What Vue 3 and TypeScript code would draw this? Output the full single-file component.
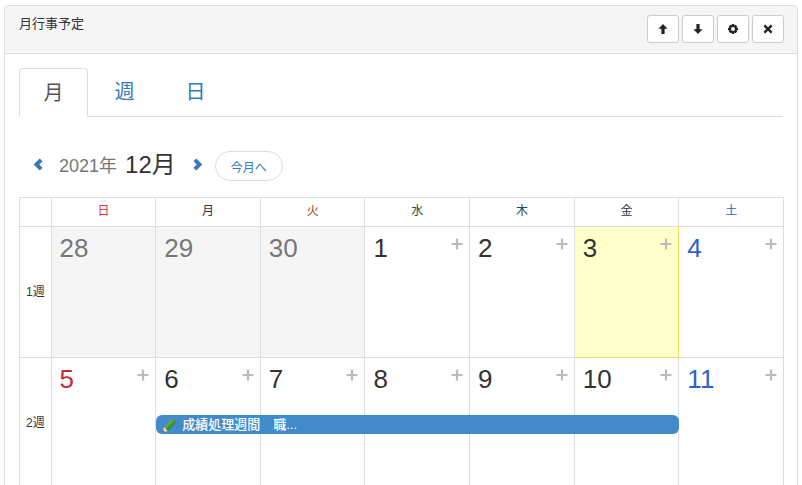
<script setup lang="ts">
interface DayCell {
  label: string
  tone?: 'muted' | 'sun' | 'sat'
  today?: boolean
  add?: boolean
}

interface Week {
  name: string
  days: DayCell[]
}

const tabs = ['月', '週', '日']

const weekdays = [
  { label: '日', cls: 'wd-sun' },
  { label: '月', cls: '' },
  { label: '火', cls: 'wd-tue' },
  { label: '水', cls: 'wd-wed' },
  { label: '木', cls: 'wd-thu' },
  { label: '金', cls: '' },
  { label: '土', cls: 'wd-sat' },
]

const weeks: Week[] = [
  {
    name: '1週',
    days: [
      { label: '28', tone: 'muted' },
      { label: '29', tone: 'muted' },
      { label: '30', tone: 'muted' },
      { label: '1', add: true },
      { label: '2', add: true },
      { label: '3', add: true, today: true },
      { label: '4', add: true, tone: 'sat' },
    ],
  },
  {
    name: '2週',
    days: [
      { label: '5', add: true, tone: 'sun' },
      { label: '6', add: true },
      { label: '7', add: true },
      { label: '8', add: true },
      { label: '9', add: true },
      { label: '10', add: true },
      { label: '11', add: true, tone: 'sat' },
    ],
  },
]
</script>

<template>
  <div class="panel">
    <div class="panel-heading">
      <span class="panel-title">月行事予定</span>
      <div class="tools">
        <button class="tool">
          <svg viewBox="0 0 12 12"><path d="M6 1 10.6 5.8H7.6V11H4.4V5.8H1.4Z" /></svg>
        </button>
        <button class="tool">
          <svg viewBox="0 0 12 12"><path d="M6 11 1.4 6.2H4.4V1H7.6V6.2H10.6Z" /></svg>
        </button>
        <button class="tool">
          <svg viewBox="0 0 12 12">
            <path fill-rule="evenodd" d="M4.9 1H7.1L7.4 2.5 8.6 1.8 10.2 3.4 9.5 4.6 11 4.9V7.1L9.5 7.4 10.2 8.6 8.6 10.2 7.4 9.5 7.1 11H4.9L4.6 9.5 3.4 10.2 1.8 8.6 2.5 7.4 1 7.1V4.9L2.5 4.6 1.8 3.4 3.4 1.8 4.6 2.5ZM6 4A2 2 0 1 0 6 8 2 2 0 1 0 6 4Z" />
          </svg>
        </button>
        <button class="tool">
          <svg viewBox="0 0 12 12"><path d="M3.2 1.5 6 4.3 8.8 1.5 10.5 3.2 7.7 6 10.5 8.8 8.8 10.5 6 7.7 3.2 10.5 1.5 8.8 4.3 6 1.5 3.2Z" /></svg>
        </button>
      </div>
    </div>

    <div class="panel-body">
      <ul class="tabs">
        <li v-for="(tab, i) in tabs" :key="tab" class="tab" :class="{ active: i === 0 }">{{ tab }}</li>
      </ul>

      <div class="month-nav">
        <svg class="chev" viewBox="0 0 10 12"><path d="M6.6 0.4 9.2 3 6.2 6 9.2 9 6.6 11.6 1 6Z" /></svg>
        <span class="year">2021年</span>
        <span class="month">12月</span>
        <svg class="chev chev-next" viewBox="0 0 10 12"><path d="M3.4 0.4 9 6 3.4 11.6 0.8 9 3.8 6 0.8 3Z" /></svg>
        <button class="this-month">今月へ</button>
      </div>

      <div class="calendar">
        <div class="row head-row">
          <div class="cell head"></div>
          <div v-for="wd in weekdays" :key="wd.label" class="cell head" :class="wd.cls">{{ wd.label }}</div>
        </div>

        <div v-for="week in weeks" :key="week.name" class="row week-row">
          <div class="cell week-name">{{ week.name }}</div>
          <div
            v-for="(day, i) in week.days"
            :key="day.label"
            class="cell day"
            :class="[day.tone, { today: day.today }]"
            :style="{ gridColumn: i + 2 }"
          >
            <span class="num">{{ day.label }}</span>
            <svg v-if="day.add" class="plus" viewBox="0 0 12 12"><path d="M4.9 0.5H7.1V4.9H11.5V7.1H7.1V11.5H4.9V7.1H0.5V4.9H4.9Z" /></svg>
          </div>
          <div v-if="week.name === '2週'" class="event">
            <svg class="pencil" viewBox="0 0 16 16">
              <path fill="#f3d3a4" d="M0.6 15.4 2 9.8 6.2 14Z" />
              <path fill="#3d3d3d" d="M0.6 15.4 1.1 13.4 2.6 14.9Z" />
              <path fill="#55a84f" d="M2 9.8 10.4 1.4 14.6 5.6 6.2 14Z" />
              <path fill="#3b8a42" d="M4.1 11.9 12.5 3.5 14.6 5.6 6.2 14Z" />
            </svg>
            <span>成績処理週間　職...</span>
          </div>
        </div>
      </div>
    </div>
  </div>
</template>

<style>
html,
body {
  margin: 0;
  height: 485px;
  overflow: hidden;
  background: #fff;
}
</style>

<style scoped>
.panel {
  width: 794px;
  margin: 5px 0 0 4px;
  box-sizing: border-box;
  border: 1px solid #ddd;
  border-radius: 4px;
  color: #333;
  font-family: "Liberation Sans", Arial, "Noto Sans CJK JP", sans-serif;
  font-size: 14px;
}

.panel-heading {
  height: 48px;
  box-sizing: border-box;
  padding: 10px 13px 0 14px;
  display: flex;
  justify-content: space-between;
  align-items: flex-start;
  background: #f5f5f5;
  border-bottom: 1px solid #ddd;
  border-radius: 3px 3px 0 0;
}

.panel-title {
  font-size: 13px;
  line-height: 16px;
}

.tools {
  display: flex;
  gap: 3px;
  margin-top: -1px;
}

.tool {
  width: 32px;
  height: 28px;
  padding: 0;
  display: flex;
  align-items: center;
  justify-content: center;
  background: #fff;
  border: 1px solid #ccc;
  border-radius: 3px;
}

.tool svg {
  width: 12px;
  height: 12px;
  fill: #222;
}

.panel-body {
  padding: 14px 14px 0 14px;
}

.tabs {
  display: flex;
  margin: 0;
  padding: 0;
  height: 49px;
  box-sizing: border-box;
  list-style: none;
  border-bottom: 1px solid #ddd;
}

.tab {
  width: 71px;
  height: 49px;
  box-sizing: border-box;
  padding-top: 10px;
  text-align: center;
  font-size: 20px;
  line-height: 28px;
  color: #337ab7;
}

.tab.active {
  width: 69px;
  margin-right: 1px;
  color: #555;
  background: #fff;
  border: 1px solid #ddd;
  border-bottom-color: #fff;
  border-radius: 4px 4px 0 0;
}

.month-nav {
  height: 34px;
  margin-top: 31px;
  margin-bottom: 15px;
  display: flex;
  align-items: center;
  padding-left: 13px;
}

.chev {
  width: 12px;
  height: 13px;
  margin-bottom: 2px;
  fill: #337ab7;
}

.year {
  margin-left: 15px;
  margin-bottom: 2px;
  font-size: 18px;
  color: #777;
}

.month {
  margin-left: 8px;
  margin-bottom: 6px;
  font-size: 24px;
  color: #333;
}

.chev-next {
  margin-left: 16px;
}

.this-month {
  margin-left: 11px;
  margin-top: 2px;
  width: 68px;
  height: 30px;
  padding: 0;
  background: #fff;
  border: 1px solid #ddd;
  border-radius: 15px;
  color: #337ab7;
  font-family: inherit;
  font-size: 12px;
}

.calendar {
  width: 765px;
  border-top: 1px solid #ddd;
  border-left: 1px solid #ddd;
  box-sizing: border-box;
}

.row {
  display: grid;
  grid-template-columns: 31.6px repeat(7, minmax(0, 1fr));
}

.cell {
  box-sizing: border-box;
  border-right: 1px solid #ddd;
  border-bottom: 1px solid #ddd;
  grid-row: 1;
}

.head {
  height: 29px;
  line-height: 27px;
  text-align: center;
  font-size: 12px;
}

.wd-sun { color: #d9333f; }
.wd-tue { color: #a3402c; }
.wd-wed { color: #2f4f2f; }
.wd-thu { color: #1f4a5f; }
.wd-sat { color: #2f62c9; }

.week-row {
  height: 131px;
}

.week-name {
  grid-column: 1;
  display: flex;
  align-items: center;
  justify-content: center;
  padding-bottom: 3px;
  font-size: 12px;
}

.day {
  display: flex;
  justify-content: space-between;
  align-items: flex-start;
  padding: 6px 6px 0 8px;
}

.num {
  font-size: 26px;
  line-height: 30px;
  color: #333;
}

.plus {
  width: 12px;
  height: 12px;
  margin-top: 5px;
  fill: #bbb;
}

.muted {
  background: #f5f5f5;
}

.muted .num {
  color: #777;
}

.sun .num {
  color: #c9273a;
}

.sat .num {
  color: #2f62c9;
}

.today {
  background: #ffc;
  border-right-color: #f0dc5a;
  border-bottom-color: #f0dc5a;
}

.event {
  grid-row: 1;
  grid-column: 3 / 8;
  align-self: start;
  height: 19px;
  margin-top: 57px;
  padding-left: 6px;
  display: flex;
  align-items: center;
  gap: 4px;
  background: #428bca;
  border-radius: 6px;
  color: #fff;
  font-size: 13px;
  font-weight: 500;
  line-height: 19px;
  z-index: 1;
}

.pencil {
  width: 16px;
  height: 16px;
  flex: none;
}
</style>
